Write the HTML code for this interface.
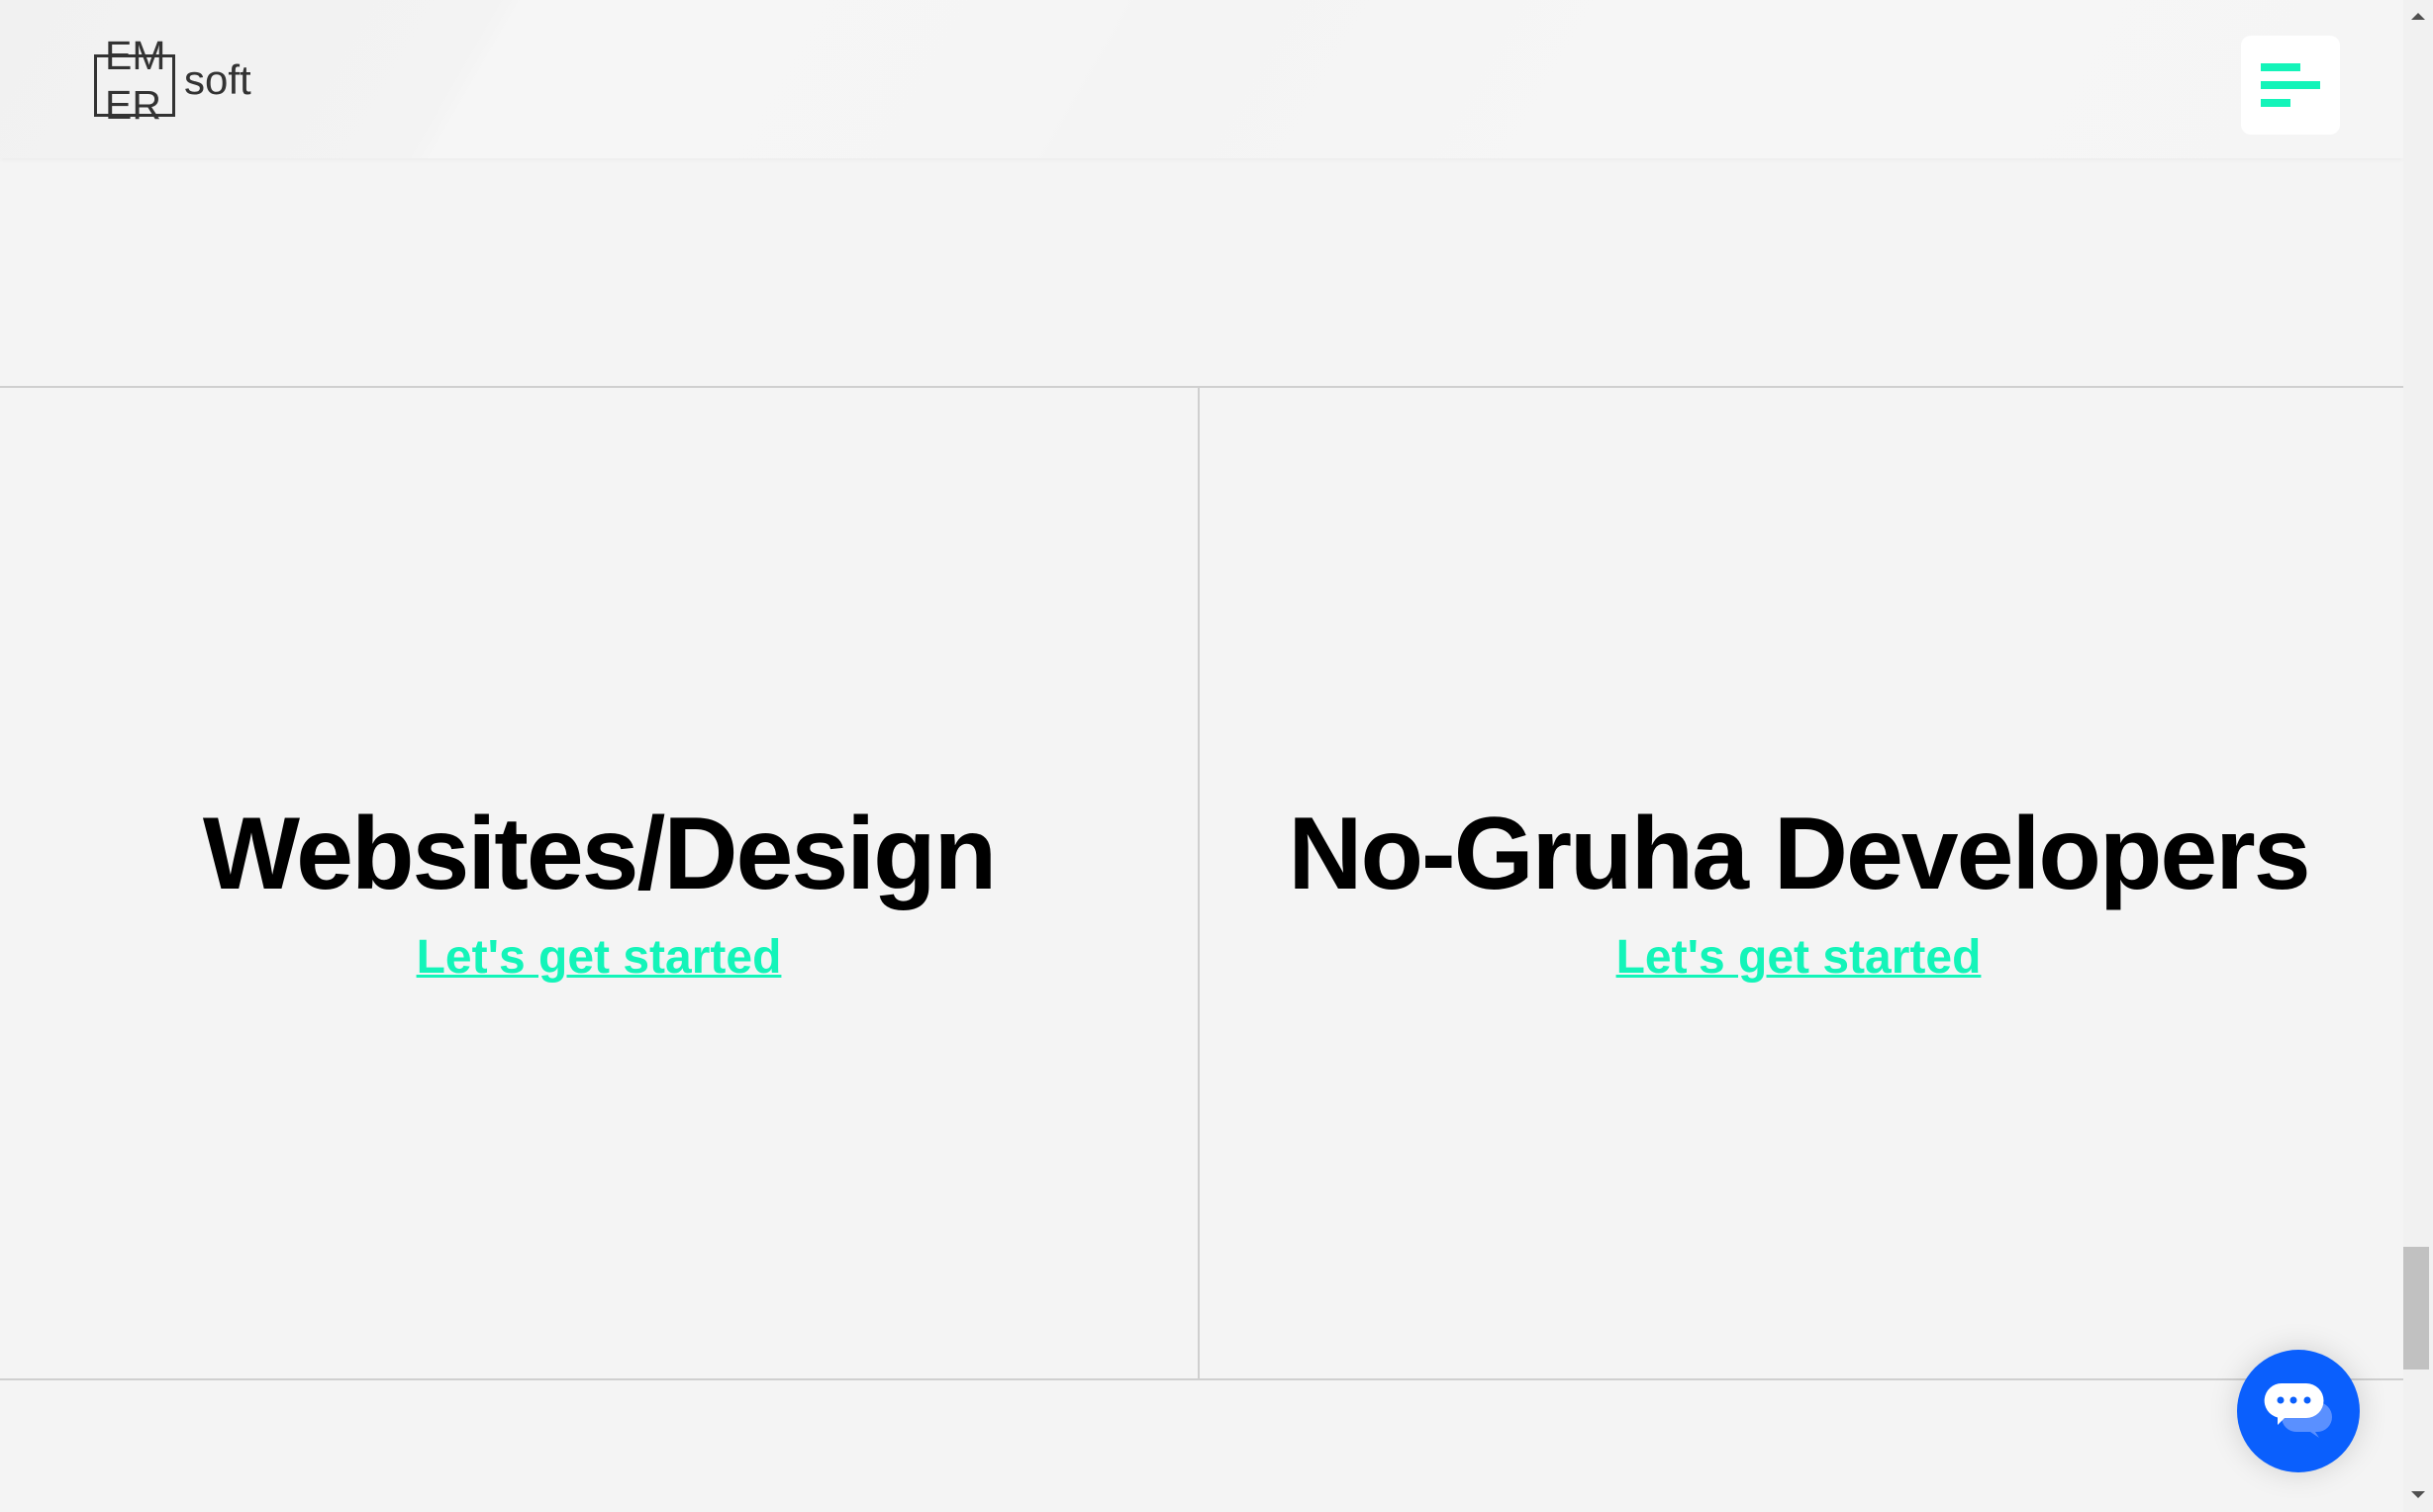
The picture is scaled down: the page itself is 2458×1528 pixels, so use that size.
<!DOCTYPE html>
<html><head><meta charset="utf-8">
<style>
html,body{margin:0;padding:0;width:2458px;height:1528px;overflow:hidden;background:#f4f4f4;font-family:"Liberation Sans",sans-serif;}
.header{position:absolute;left:0;top:0;width:2428px;height:160px;background:linear-gradient(120deg,#f1f1f1 0%,#f3f3f3 20%,#f6f6f6 21%,#f5f5f5 45%,#f4f4f4 46%,#f6f6f6 70%,#f5f5f5 100%);box-shadow:0 2px 4px rgba(0,0,0,0.03);}
.logo-box{position:absolute;left:95px;top:55px;width:82px;height:63px;border:3px solid #333;box-sizing:border-box;}
.em{position:absolute;left:106px;top:36px;font-size:41px;color:#333;line-height:1;}
.er{position:absolute;left:106px;top:86px;font-size:41px;color:#333;line-height:1;}
.soft{position:absolute;left:186px;top:60px;font-size:42px;color:#333;line-height:1;}
.menu{position:absolute;left:2264px;top:36px;width:100px;height:100px;background:#fff;border-radius:10px;}
.menu i{position:absolute;left:20px;height:8px;background:#13f4b9;}
.hl{position:absolute;left:0;width:2428px;height:2px;background:#cfcfcf;}
.vl{position:absolute;left:1210px;top:392px;width:2px;height:1002px;background:#cfcfcf;}
.col{position:absolute;top:798px;width:1210px;text-align:center;}
.col h2{margin:0;font-size:104px;font-weight:bold;color:#000;letter-spacing:-2px;line-height:130px;}
.col a{display:inline-block;margin-top:12px;font-size:48px;font-weight:bold;color:#13f4b9;text-decoration:underline;text-decoration-thickness:3px;}
.sb{position:absolute;left:2428px;top:0;width:30px;height:1528px;background:#f1f1f1;}
.thumb{position:absolute;left:2428px;top:1260px;width:26px;height:124px;background:#c1c1c1;}
.chat{position:absolute;left:2260px;top:1364px;width:124px;height:124px;border-radius:50%;background:#0a5ffd;box-shadow:0 0 30px rgba(0,0,0,0.15);}
</style></head><body>
<div class="header">
  <div class="logo-box"></div>
  <div class="em">EM</div>
  <div class="er">ER</div>
  <div class="soft">soft</div>
  <div class="menu"><i style="top:28px;width:40px"></i><i style="top:46px;width:60px"></i><i style="top:64px;width:30px"></i></div>
</div>
<div class="hl" style="top:390px"></div>
<div class="hl" style="top:1393px"></div>
<div class="vl"></div>
<div class="col" style="left:0"><h2>Websites/Design</h2><a>Let's get started</a></div>
<div class="col" style="left:1212px"><h2>No-Gruha Developers</h2><a>Let's get started</a></div>
<div class="sb"></div>
<div class="thumb"></div>
<svg style="position:absolute;left:2433px;top:10px" width="20" height="12"><path d="M3 10 L10 3 L17 10Z" fill="#505050"/></svg>
<svg style="position:absolute;left:2433px;top:1505px" width="20" height="12"><path d="M3 2 L10 9 L17 2Z" fill="#505050"/></svg>
<div class="chat">
<svg width="124" height="124" viewBox="0 0 124 124">
<path d="M60 53 h21 a15 15 0 0 1 0 30 h-2 l4 6 l-9 -6 h-14 a15 15 0 0 1 0 -30z" fill="#5a90ff"/>
<path d="M45 34 h25 a17.5 17.5 0 0 1 0 35 h-22 l-7 7 l0 -7.5 a17.5 17.5 0 0 1 4 -34.5z" fill="#fff"/>
<circle cx="44" cy="51" r="3.5" fill="#0a5ffd"/><circle cx="57" cy="51" r="3.5" fill="#0a5ffd"/><circle cx="71" cy="51" r="3.5" fill="#0a5ffd"/>
</svg></div>
</body></html>
